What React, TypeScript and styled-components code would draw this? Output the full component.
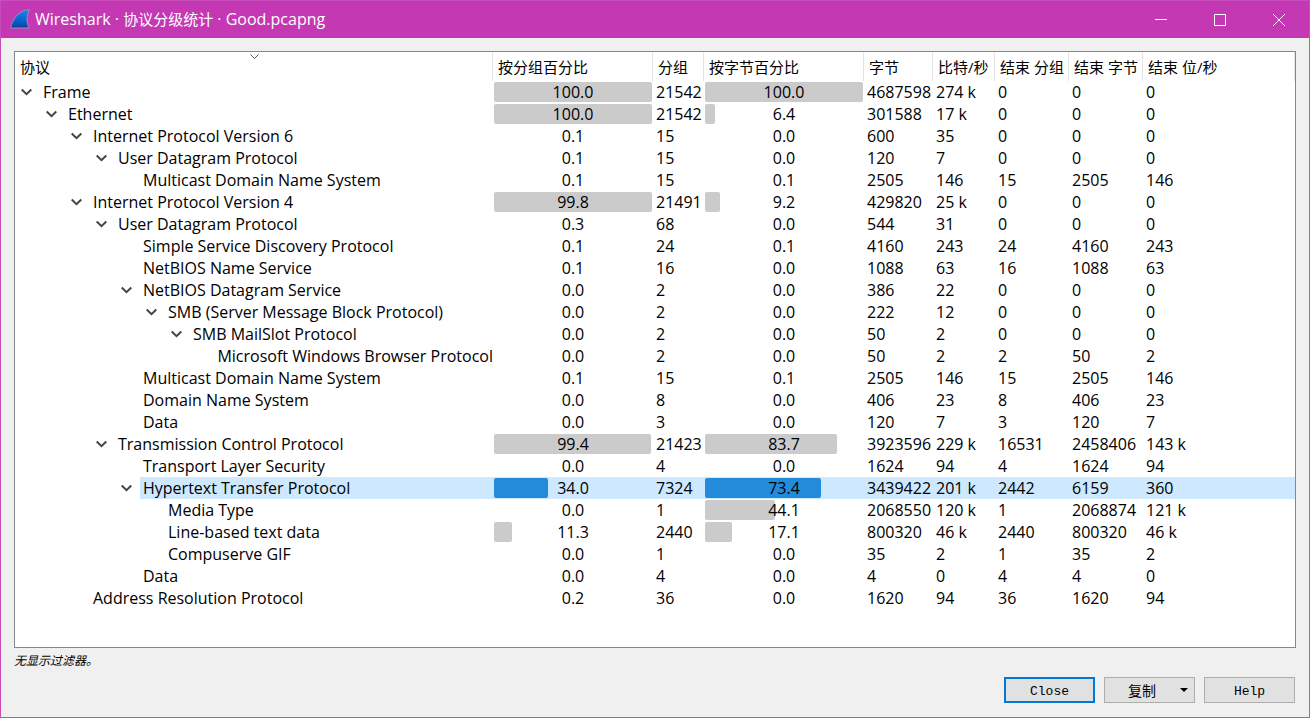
import React from "react";
import styled, { createGlobalStyle } from "styled-components";

const GlobalStyle = createGlobalStyle`
  * { box-sizing: border-box; }
  body {
    margin: 0;
    background: #f0f0f0;
    color: #000;
    font-family: "Open Sans", "Noto Sans CJK SC", sans-serif;
    font-size: 15px;
  }
`;

const Window = styled.div`
  display: flex;
  flex-direction: column;
  min-height: 100vh;
  border: 1px solid #c84dba;
  background: #f0f0f0;
`;

const TitleBar = styled.header`
  display: flex;
  align-items: stretch;
  height: 37px;
  padding: 0 1px 0 8px;
  background: #c438b4;
  color: #fff;
`;

const Title = styled.h1`
  display: flex;
  align-items: center;
  gap: 4px;
  flex: 1;
  margin: 0;
  padding-bottom: 1px;
  font-size: 16px;
  line-height: 20px;
  font-weight: 400;
`;

const TitleTopic = styled.span`
  font-size: 15px;
`;

const WindowButton = styled.button`
  display: flex;
  align-items: center;
  justify-content: center;
  width: 59px;
  padding: 0;
  border: 0;
  background: transparent;
`;

const Content = styled.main`
  display: flex;
  flex-direction: column;
  flex: 1;
  padding: 13px 13px 14px;
`;

const TreeView = styled.div`
  flex: 1;
  border: 1px solid #828790;
  background: #fff;
`;

const Table = styled.table`
  width: 100%;
  table-layout: fixed;
  border-collapse: separate;
  border-spacing: 0;
  white-space: nowrap;
`;

const Column = styled.col<{ $width?: number }>`
  width: ${(p) => (p.$width ? `${p.$width}px` : "auto")};
`;

const HeaderCell = styled.th`
  position: relative;
  height: 29px;
  padding: 0 0 0 5px;
  border-right: 1px solid #e5e5e5;
  font-weight: 400;
  line-height: 20px;
  text-align: left;
`;

const SortMark = styled.svg`
  position: absolute;
  top: 2px;
  left: 50%;
  margin-left: -4px;
`;

const Row = styled.tr`
  height: 22px;
  font-size: 16px;
`;

const Cell = styled.td<{ $selected?: boolean }>`
  height: 22px;
  padding: 0 0 0 3px;
  line-height: 22px;
  background: ${(p) => (p.$selected ? "#cde8ff" : "transparent")};
`;

const TreeCell = styled.td`
  height: 22px;
  padding: 0;
`;

const Branch = styled.div<{ $depth: number }>`
  display: flex;
  padding-left: ${(p) => p.$depth * 25}px;
`;

const Toggle = styled.button`
  display: flex;
  align-items: center;
  width: 25px;
  height: 22px;
  padding: 0 0 0 6px;
  border: 0;
  background: transparent;
`;

const Leaf = styled.span`
  width: 25px;
`;

const Name = styled.span<{ $selected?: boolean }>`
  flex: 1;
  padding-left: 3px;
  line-height: 22px;
  background: ${(p) => (p.$selected ? "#cde8ff" : "transparent")};
`;

const MeterCell = styled(Cell)`
  padding: 0 1px;
`;

const Meter = styled.div`
  display: grid;
  align-items: center;
  height: 22px;
`;

const Bar = styled.span<{ $selected?: boolean }>`
  grid-area: 1 / 1;
  height: 20px;
  border-radius: 2px;
  background: ${(p) => (p.$selected ? "#248bdb" : "#cbcbcb")};
`;

const MeterText = styled.span`
  grid-area: 1 / 1;
  text-align: center;
`;

const FilterNote = styled.p`
  height: 18px;
  margin: 4px 0 7px;
  font-size: 12px;
  font-style: italic;
  line-height: 18px;
`;

const ButtonBar = styled.footer`
  display: flex;
  justify-content: flex-end;
  gap: 9px;
  padding-right: 1px;
`;

const PushButton = styled.button<{ $primary?: boolean }>`
  display: flex;
  align-items: center;
  justify-content: center;
  width: 91px;
  height: 26px;
  padding: 2px 0 0;
  border: ${(p) => (p.$primary ? "2px solid #0078d7" : "1px solid #adadad")};
  background: #e1e1e1;
  color: #000;
  font-family: "Liberation Mono", monospace;
  font-size: 13px;
`;

const MenuButton = styled(PushButton)`
  justify-content: flex-end;
  gap: 24px;
  padding: 0 6px 0 0;
  font-family: "Noto Sans CJK SC", sans-serif;
  font-size: 14px;
  line-height: 20px;
`;

type Entry = [number, string, boolean, string, string, string, string, string, string, string, string];

const entries: Entry[] = [
  [0, "Frame", true, "100.0", "21542", "100.0", "4687598", "274 k", "0", "0", "0"],
  [1, "Ethernet", true, "100.0", "21542", "6.4", "301588", "17 k", "0", "0", "0"],
  [2, "Internet Protocol Version 6", true, "0.1", "15", "0.0", "600", "35", "0", "0", "0"],
  [3, "User Datagram Protocol", true, "0.1", "15", "0.0", "120", "7", "0", "0", "0"],
  [4, "Multicast Domain Name System", false, "0.1", "15", "0.1", "2505", "146", "15", "2505", "146"],
  [2, "Internet Protocol Version 4", true, "99.8", "21491", "9.2", "429820", "25 k", "0", "0", "0"],
  [3, "User Datagram Protocol", true, "0.3", "68", "0.0", "544", "31", "0", "0", "0"],
  [4, "Simple Service Discovery Protocol", false, "0.1", "24", "0.1", "4160", "243", "24", "4160", "243"],
  [4, "NetBIOS Name Service", false, "0.1", "16", "0.0", "1088", "63", "16", "1088", "63"],
  [4, "NetBIOS Datagram Service", true, "0.0", "2", "0.0", "386", "22", "0", "0", "0"],
  [5, "SMB (Server Message Block Protocol)", true, "0.0", "2", "0.0", "222", "12", "0", "0", "0"],
  [6, "SMB MailSlot Protocol", true, "0.0", "2", "0.0", "50", "2", "0", "0", "0"],
  [7, "Microsoft Windows Browser Protocol", false, "0.0", "2", "0.0", "50", "2", "2", "50", "2"],
  [4, "Multicast Domain Name System", false, "0.1", "15", "0.1", "2505", "146", "15", "2505", "146"],
  [4, "Domain Name System", false, "0.0", "8", "0.0", "406", "23", "8", "406", "23"],
  [4, "Data", false, "0.0", "3", "0.0", "120", "7", "3", "120", "7"],
  [3, "Transmission Control Protocol", true, "99.4", "21423", "83.7", "3923596", "229 k", "16531", "2458406", "143 k"],
  [4, "Transport Layer Security", false, "0.0", "4", "0.0", "1624", "94", "4", "1624", "94"],
  [4, "Hypertext Transfer Protocol", true, "34.0", "7324", "73.4", "3439422", "201 k", "2442", "6159", "360"],
  [5, "Media Type", false, "0.0", "1", "44.1", "2068550", "120 k", "1", "2068874", "121 k"],
  [5, "Line-based text data", false, "11.3", "2440", "17.1", "800320", "46 k", "2440", "800320", "46 k"],
  [5, "Compuserve GIF", false, "0.0", "1", "0.0", "35", "2", "1", "35", "2"],
  [4, "Data", false, "0.0", "4", "0.0", "4", "0", "4", "4", "0"],
  [2, "Address Resolution Protocol", false, "0.2", "36", "0.0", "1620", "94", "36", "1620", "94"],
];

const headers = ["协议", "按分组百分比", "分组", "按字节百分比", "字节", "比特/秒", "结束 分组", "结束 字节", "结束 位/秒"];
const widths = [478, 160, 51, 160, 69, 62, 74, 74];

function Percent({ value, selected }: { value: string; selected: boolean }) {
  // Shares below one percent show no bar.
  const share = Number(value);
  return (
    <MeterCell $selected={selected}>
      <Meter>
        {share >= 1 && <Bar $selected={selected} style={{ width: `${share}%` }} />}
        <MeterText>{value}</MeterText>
      </Meter>
    </MeterCell>
  );
}

function FinLogo() {
  return (
    <svg width="22" height="22" viewBox="0 0 22 22" aria-hidden="true">
      <defs>
        <linearGradient id="fin" x1="0" y1="0" x2="0" y2="1">
          <stop offset="0" stopColor="#1a86ea" />
          <stop offset="0.6" stopColor="#0a62cc" />
          <stop offset="1" stopColor="#0c3f9c" />
        </linearGradient>
      </defs>
      <path
        d="M1.5 20C4 10 9.5 2.5 20.5 1.5C17.5 7 17 14 20 20Z"
        fill="url(#fin)"
        stroke="#8f8fce"
        strokeWidth="1"
      />
    </svg>
  );
}

export default function App() {
  const [selected, setSelected] = React.useState(18);
  return (
    <Window>
      <GlobalStyle />
      <TitleBar>
        <Title>
          <FinLogo />
          <span>
            Wireshark · <TitleTopic>协议分级统计</TitleTopic> · Good.pcapng
          </span>
        </Title>
        <WindowButton aria-label="Minimize">
          <svg width="12" height="12" fill="none" stroke="#fff">
            <path d="M0 5.5H12" />
          </svg>
        </WindowButton>
        <WindowButton aria-label="Maximize">
          <svg width="12" height="12" fill="none" stroke="#fff">
            <path d="M.5 .5H11.5V11.5H.5Z" />
          </svg>
        </WindowButton>
        <WindowButton aria-label="Close window">
          <svg width="12" height="12" fill="none" stroke="#fff">
            <path d="M0 0L12 12M12 0L0 12" />
          </svg>
        </WindowButton>
      </TitleBar>
      <Content>
        <TreeView>
          <Table>
            <colgroup>
              {widths.map((w, i) => (
                <Column key={i} $width={w} />
              ))}
              <Column />
            </colgroup>
            <thead>
              <tr>
                {headers.map((h, i) => (
                  <HeaderCell key={h} scope="col">
                    {i === 0 && (
                      <SortMark width="9" height="5" fill="none" stroke="#555">
                        <path d="M.5 .5L4.5 4.5L8.5 .5" />
                      </SortMark>
                    )}
                    {h}
                  </HeaderCell>
                ))}
              </tr>
            </thead>
            <tbody>
              {entries.map(([depth, name, open, packetShare, packets, byteShare, ...rest], i) => {
                const on = i === selected;
                return (
                  <Row key={i} onClick={() => setSelected(i)}>
                    <TreeCell>
                      <Branch $depth={depth}>
                        {open ? (
                          <Toggle aria-label={name} aria-expanded="true">
                            <svg width="11" height="8" fill="none" stroke="#444" strokeWidth="2">
                              <path d="M.7 1.5L5.5 6.2L10.3 1.5" />
                            </svg>
                          </Toggle>
                        ) : (
                          <Leaf />
                        )}
                        <Name $selected={on}>{name}</Name>
                      </Branch>
                    </TreeCell>
                    <Percent value={packetShare} selected={on} />
                    <Cell $selected={on}>{packets}</Cell>
                    <Percent value={byteShare} selected={on} />
                    {rest.map((v, j) => (
                      <Cell key={j} $selected={on}>
                        {v}
                      </Cell>
                    ))}
                  </Row>
                );
              })}
            </tbody>
          </Table>
        </TreeView>
        <FilterNote>无显示过滤器。</FilterNote>
        <ButtonBar>
          <PushButton $primary>Close</PushButton>
          <MenuButton aria-haspopup="menu">
            复制
            <svg width="8" height="4" aria-hidden="true">
              <path d="M0 0H8L4 4Z" />
            </svg>
          </MenuButton>
          <PushButton>Help</PushButton>
        </ButtonBar>
      </Content>
    </Window>
  );
}
